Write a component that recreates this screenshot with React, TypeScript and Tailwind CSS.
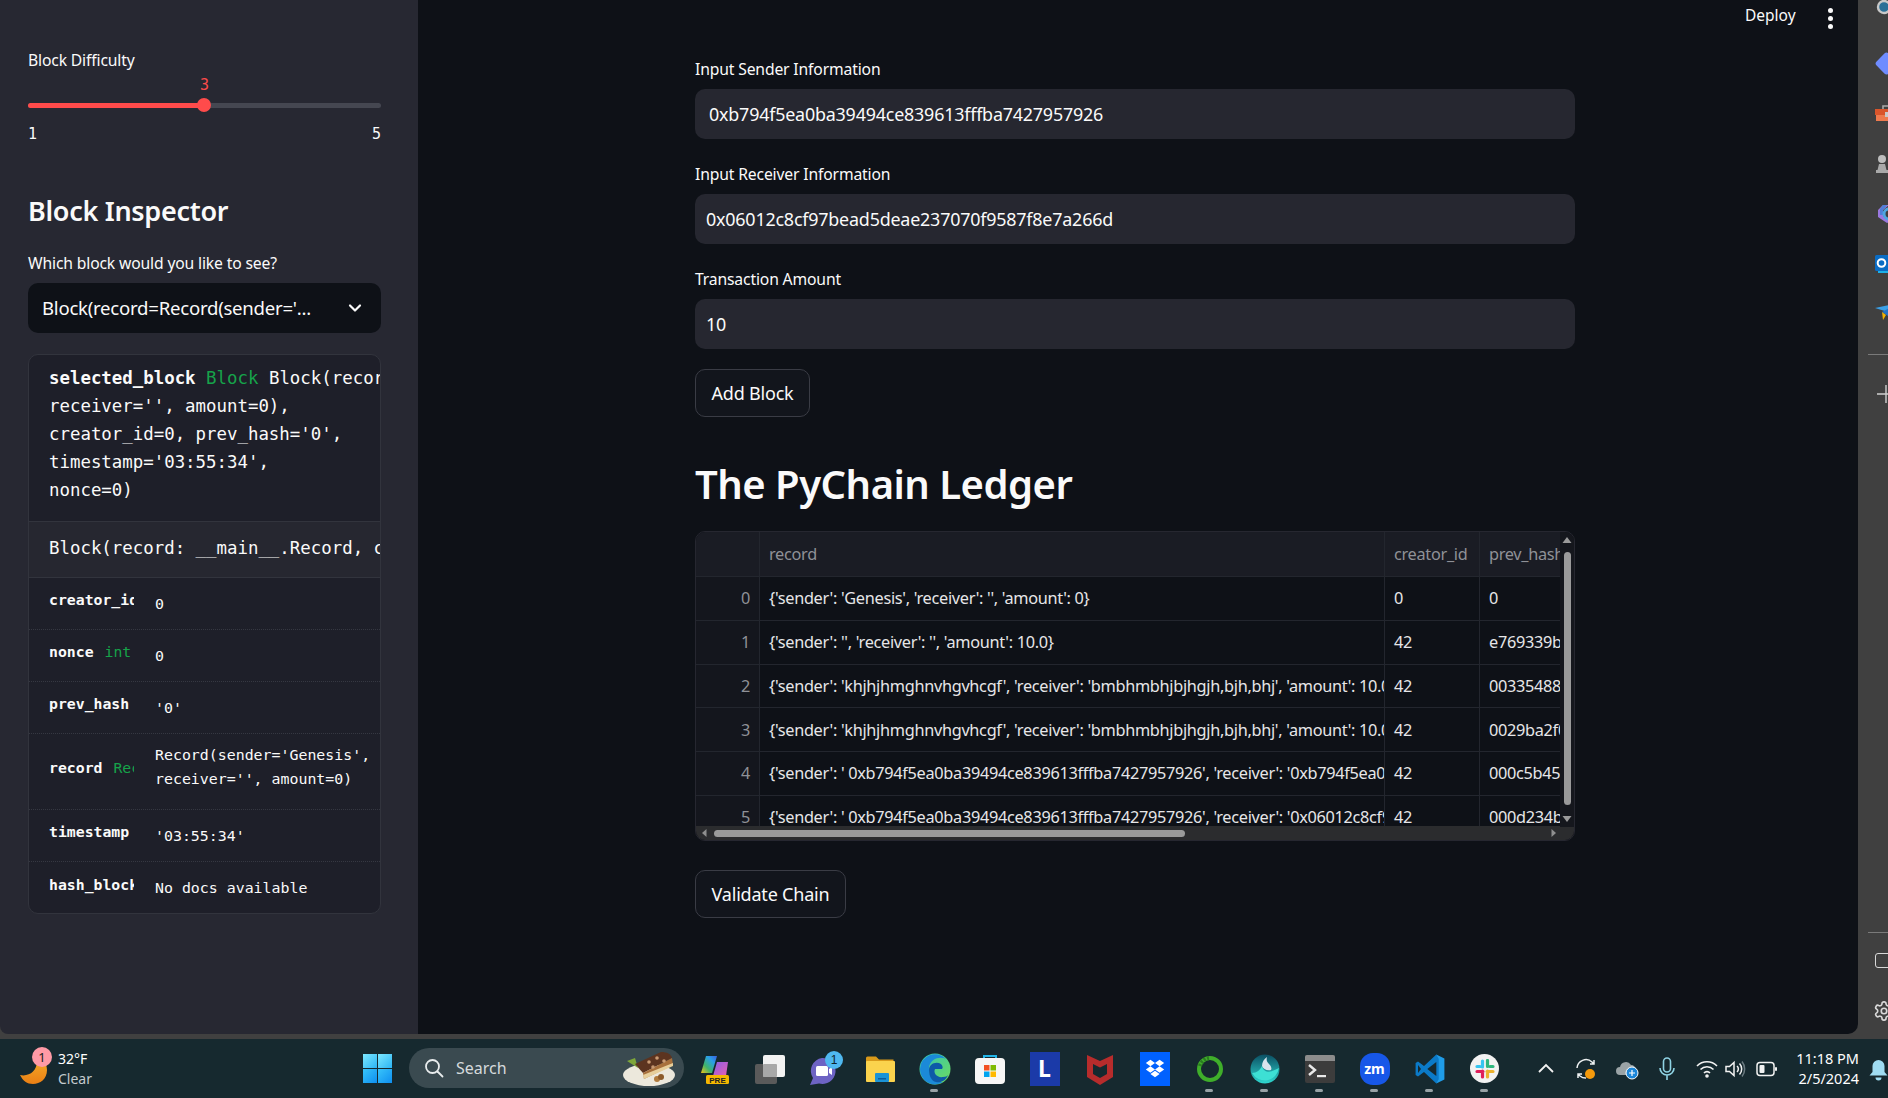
import React from "react";

const sans = "font-['Noto_Sans',sans-serif]";
const mono = "font-['DejaVu_Sans_Mono',monospace]";

function Label({ children }: { children: React.ReactNode }) {
  return <div className="h-[20px] text-[15.7px] leading-[20px] text-[#fafafa] whitespace-nowrap tracking-[-0.15px]">{children}</div>;
}

function Field({ label, value, px, mt }: { label: string; value: string; px: string; mt: string }) {
  return (
    <div className={mt}>
      <Label>{label}</Label>
      <div className={`mt-[10px] h-[50px] rounded-[10px] bg-[#262730] flex items-center text-[17.9px] text-[#fafafa] tracking-[-0.2px] ${px}`}>{value}</div>
    </div>
  );
}

function Btn({ children, w, mt }: { children: React.ReactNode; w: string; mt: string }) {
  return (
    <div className={`${w} ${mt} h-[48px] rounded-[10px] border border-[#3a3c45] bg-[#12151c] flex items-center justify-center text-[18px] text-[#fafafa] tracking-[-0.2px]`}>{children}</div>
  );
}

const COLS = "grid grid-cols-[64px_625px_95px_82px]";
const rows: [string, string, string, string][] = [
  ["0", "{'sender': 'Genesis', 'receiver': '', 'amount': 0}", "0", "0"],
  ["1", "{'sender': '', 'receiver': '', 'amount': 10.0}", "42", "e769339b1"],
  ["2", "{'sender': 'khjhjhmghnvhgvhcgf', 'receiver': 'bmbhmbhjbjhgjh,bjh,bhj', 'amount': 10.0}", "42", "003354885"],
  ["3", "{'sender': 'khjhjhmghnvhgvhcgf', 'receiver': 'bmbhmbhjbjhgjh,bjh,bhj', 'amount': 10.0}", "42", "0029ba2f0"],
  ["4", "{'sender': ' 0xb794f5ea0ba39494ce839613fffba7427957926', 'receiver': '0xb794f5ea0ba39494ce839613fffba7427957926'}", "42", "000c5b452"],
  ["5", "{'sender': ' 0xb794f5ea0ba39494ce839613fffba7427957926', 'receiver': '0x06012c8cf97bead5deae237070f9587f8e7a266d'}", "42", "000d234b4"],
];

function Cell({ children, last }: { children: React.ReactNode; last?: boolean }) {
  return (
    <div className={`px-[9px] flex items-center overflow-hidden whitespace-nowrap border-b border-[#23262e] ${last ? "" : "border-r"}`}>
      <span className="block">{children}</span>
    </div>
  );
}

function DataTable() {
  return (
    <div className="mt-[19px] w-[880px] h-[310px] rounded-[10px] border border-[#262730] overflow-hidden relative flex flex-col text-[16.3px] tracking-[-0.3px]">
      <div className="h-[295px] overflow-hidden w-[866px]">
        <div className={`${COLS} h-[45px] bg-[#1a1c24] text-[#8f9197]`}>
          <Cell>{""}</Cell>
          <Cell>record</Cell>
          <Cell>creator_id</Cell>
          <Cell last>prev_hash</Cell>
        </div>
        {rows.map((r) => (
          <div key={r[0]} className={`${COLS} h-[43.8px] text-[#e6e6e8]`}>
            <div className="pr-[9px] flex items-center justify-end bg-[#14161d] text-[#8f9197] border-r border-b border-[#23262e]">{r[0]}</div>
            <Cell>{r[1]}</Cell>
            <Cell>{r[2]}</Cell>
            <Cell last>{r[3]}</Cell>
          </div>
        ))}
      </div>
      {/* horizontal scrollbar */}
      <div className="h-[14px] bg-[#2b2c2e] flex items-center relative">
        <svg width="880" height="14" className="absolute left-0 top-0">
          <path d="M6 7l4.500-4v8z" fill="#8f8f8f" />
          <path d="M860 7l-4.500-4v8z" fill="#8f8f8f" />
        </svg>
        <div className="ml-[18px] w-[471px] h-[7px] rounded-full bg-[#9a9a9a] relative" />
      </div>
      {/* vertical scrollbar */}
      <div className="absolute right-0 top-0 w-[14px] h-[295px] bg-[#15171d] flex justify-center">
        <svg width="14" height="295" className="absolute left-0 top-0">
          <path d="M7 5l4.500 6h-9z" fill="#9a9a9a" />
          <path d="M7 290l4.500-6h-9z" fill="#9a9a9a" />
        </svg>
        <div className="mt-[20px] w-[7px] h-[253px] rounded-full bg-[#9a9a9a]" />
      </div>
    </div>
  );
}

function InspectRow({ name, type, h, valueClass, children }: { name: string; type?: string; h: string; valueClass?: string; children: React.ReactNode }) {
  return (
    <div className={`${h} flex border-b border-dotted border-[#363842] last:border-b-0`}>
      <div className="w-[85px] ml-[20px] shrink-0 overflow-hidden whitespace-nowrap flex items-center pb-[6px] text-[14.8px]">
        <b className="font-bold text-[#fafafa]">{name}</b>
        {type && <span className="ml-[11px] text-[#16a34a]">{type}</span>}
      </div>
      <div className={`ml-[21px] flex items-center text-[14.9px] leading-[24px] text-[#fafafa] whitespace-pre ${valueClass ?? ""}`}>{children}</div>
    </div>
  );
}

function Inspector() {
  return (
    <div className={`mt-[21px] h-[560px] rounded-[10px] border border-[#32343d] overflow-hidden bg-[#1e1f29] ${mono}`}>
      <div className="h-[167px] pl-[20px] pt-[9px] text-[17.4px] leading-[28px] text-[#fafafa] whitespace-pre overflow-hidden border-b border-[#32343d]">
        <div><b>selected_block</b> <span className="text-[#16a34a]">Block</span> Block(record=Record(sender='Genesis',</div>
        <div>receiver='', amount=0),</div>
        <div>creator_id=0, prev_hash='0',</div>
        <div>timestamp='03:55:34',</div>
        <div>nonce=0)</div>
      </div>
      <div className="h-[56px] pl-[20px] pb-[3px] flex items-center text-[17.4px] bg-[#262730] text-[#fafafa] whitespace-pre overflow-hidden border-b border-[#32343d]">
        Block(record: __main__.Record, creator_id: int)
      </div>
      <InspectRow name="creator_id" h="h-[52px]">0</InspectRow>
      <InspectRow name="nonce" type="int" h="h-[52px]">0</InspectRow>
      <InspectRow name="prev_hash" h="h-[52px]">'0'</InspectRow>
      <InspectRow name="record" type="Record" h="h-[76px]" valueClass="pb-[9px]">{"Record(sender='Genesis',\nreceiver='', amount=0)"}</InspectRow>
      <InspectRow name="timestamp" h="h-[52px]">'03:55:34'</InspectRow>
      <InspectRow name="hash_block" h="h-[52px]">No docs available</InspectRow>
    </div>
  );
}

function Sidebar() {
  return (
    <aside className="w-[418px] shrink-0 bg-[#272832] rounded-bl-[8px] pl-[28px] pr-[37px] pt-[50px]">
      <Label>Block Difficulty</Label>
      <div className="pt-[33px]">
        <div className="relative h-[5px] rounded-full bg-[#454751]">
          <div className="h-[5px] w-[176px] rounded-full bg-[#ff4b4b]" />
          <div className="absolute left-[169px] top-[-5px] w-[14px] h-[14px] rounded-full bg-[#ff4b4b]" />
          <div className={`absolute left-[172px] top-[-27px] h-[18px] leading-[18px] text-[15px] text-[#ff4b4b] ${mono}`}>3</div>
        </div>
      </div>
      <div className={`mt-[17px] h-[18px] leading-[18px] flex justify-between text-[15px] text-[#fafafa] ${mono}`}>
        <span>1</span>
        <span>5</span>
      </div>
      <h2 className="mt-[50px] h-[36px] leading-[36px] text-[27px] font-semibold text-[#fafafa] tracking-[-0.3px]">Block Inspector</h2>
      <div className="mt-[24px]"><Label>Which block would you like to see?</Label></div>
      <div className="mt-[10px] h-[50px] rounded-[10px] bg-[#0e1117] pl-[14px] pr-[16px] flex items-center justify-between text-[18.6px] text-[#fafafa] tracking-[-0.25px]">
        <span>Block(record=Record(sender='...</span>
        <svg width="20" height="20" viewBox="0 0 20 20" fill="none"><path d="M5 7.500l5 5 5-5" stroke="#fafafa" strokeWidth="2.200" strokeLinecap="round" strokeLinejoin="round" /></svg>
      </div>
      <Inspector />
    </aside>
  );
}

function RightBar() {
  return (
    <div className="w-[30px] shrink-0 flex flex-col overflow-hidden">
      <div className="h-[20px] pl-[17px] flex items-center"><svg width="24" height="24" viewBox="0 0 24 24" className="shrink-0"><circle cx="9" cy="9" r="6" fill="#2a6f97" stroke="#c8c8c8" strokeWidth="2.400" /></svg></div>
      <div className="mt-[19px] h-[50px] pl-[17px] flex items-center"><svg width="24" height="24" viewBox="0 0 24 24" className="shrink-0"><rect x="3" y="3" width="17" height="17" rx="3" transform="rotate(45 11.500 11.500)" fill="#6f8cff" /></svg></div>
      <div className="h-[50px] pl-[17px] flex items-center"><svg width="24" height="24" viewBox="0 0 24 24" className="shrink-0"><path d="M8 7V4h9v3" stroke="#a8a8a8" strokeWidth="1.600" fill="none" /><rect y="7" width="24" height="6" fill="#d9552b" /><rect x="1" y="13" width="22" height="6" fill="#ee7a4e" /><rect x="10" y="10" width="4" height="5" fill="#c9c9c9" /></svg></div>
      <div className="h-[50px] pl-[17px] flex items-center"><svg width="24" height="24" viewBox="0 0 24 24" className="shrink-0"><circle cx="7" cy="7" r="4" fill="#bdbdbd" /><path d="M4 12h6l1.500 6H2.500z M1 18h12v3H1z" fill="#a9a9a9" /><rect x="13" y="2" width="4" height="4" fill="#8f6ac9" /><rect x="13" y="10" width="4" height="4" fill="#8f6ac9" /></svg></div>
      <div className="h-[50px] pl-[17px] flex items-center"><svg width="24" height="24" viewBox="0 0 24 24" className="shrink-0"><path d="M3 8l5-5h6L8 8v6l8 5-4 2-9-6z" fill="#9a78e0" /><path d="M8 3h4L8 8v5H5V7z" fill="#4e7fd8" /><circle cx="14" cy="12" r="5" fill="none" stroke="#4fa6e0" strokeWidth="3" /></svg></div>
      <div className="h-[50px] pl-[17px] flex items-center"><svg width="24" height="24" viewBox="0 0 24 24" className="shrink-0"><rect x="3" y="6" width="21" height="15" fill="#1db0e8" /><rect y="3" width="15" height="16" rx="1.500" fill="#0a6cc4" /><circle cx="6.500" cy="11" r="3.800" fill="none" stroke="#ffffff" strokeWidth="2" /></svg></div>
      <div className="mt-[2px] h-[44px] pl-[17px] flex items-center"><svg width="24" height="24" viewBox="0 0 24 24" className="shrink-0"><path d="M0 7l24-5-11 9z" fill="#3aa0e8" /><path d="M7 11l17-9-8 15z" fill="#2474c8" /><path d="M7 11l1 8 3-5z" fill="#f5b301" /></svg></div>
      <div className="mt-[19px] ml-[10px] w-[20px] h-px bg-[#7a7a7a]" />
      <div className="mt-[28px] h-[22px] pl-[18px] flex items-center"><svg width="22" height="22" viewBox="0 0 22 22" className="shrink-0"><path d="M10 2v18M1 11h18" stroke="#cfcfcf" strokeWidth="1.400" /></svg></div>
      <div className="flex-1" />
      <div className="ml-[10px] w-[20px] h-px bg-[#7a7a7a]" />
      <div className="mt-[19px] h-[16px] pl-[17px] flex items-center"><div className="w-[20px] h-[15px] shrink-0 rounded-[3px] border-[1.500px] border-[#d8d8d8]" /></div>
      <div className="mt-[32px] mb-[12px] h-[22px] pl-[15px] flex items-center"><svg width="22" height="22" viewBox="0 0 24 24" fill="none" stroke="#d8d8d8" strokeWidth="1.800" className="shrink-0"><path d="M12.220 2h-.44a2 2 0 0 0-2 2v.18a2 2 0 0 1-1 1.730l-.43.250a2 2 0 0 1-2 0l-.15-.080a2 2 0 0 0-2.730.730l-.22.380a2 2 0 0 0 .730 2.730l.15.100a2 2 0 0 1 1 1.720v.510a2 2 0 0 1-1 1.740l-.15.090a2 2 0 0 0-.730 2.730l.22.380a2 2 0 0 0 2.730.730l.15-.080a2 2 0 0 1 2 0l.43.250a2 2 0 0 1 1 1.730V20a2 2 0 0 0 2 2h.44a2 2 0 0 0 2-2v-.18a2 2 0 0 1 1-1.730l.43-.250a2 2 0 0 1 2 0l.15.080a2 2 0 0 0 2.730-.730l.22-.390a2 2 0 0 0-.730-2.730l-.15-.080a2 2 0 0 1-1-1.740v-.500a2 2 0 0 1 1-1.740l.15-.090a2 2 0 0 0 .730-2.730l-.22-.380a2 2 0 0 0-2.730-.730l-.15.080a2 2 0 0 1-2 0l-.43-.250a2 2 0 0 1-1-1.730V4a2 2 0 0 0-2-2z" /><circle cx="12" cy="12" r="3" /></svg></div>
    </div>
  );
}

function Slot({ children, dot }: { children: React.ReactNode; dot?: boolean }) {
  return (
    <div className="w-[55px] h-full relative flex items-center justify-center shrink-0">
      {children}
      {dot && <div className="absolute bottom-[6px] left-[23px] w-[8px] h-[3px] rounded-full bg-[#98a2a6]" />}
    </div>
  );
}

const Copilot = () => (
  <svg width="32" height="32" viewBox="0 0 32 32">
    <defs>
      <linearGradient id="cp1" x1="0" y1="1" x2="1" y2="0"><stop offset="0" stopColor="#f5c518" /><stop offset=".35" stopColor="#3fb46a" /><stop offset=".7" stopColor="#2a9fe8" /><stop offset="1" stopColor="#3a5fe0" /></linearGradient>
      <linearGradient id="cp2" x1="0" y1="0" x2="1" y2="1"><stop offset="0" stopColor="#8a5fe8" /><stop offset="1" stopColor="#e85fb0" /></linearGradient>
    </defs>
    <path d="M7 3h11l-5 17H2z" fill="url(#cp1)" />
    <path d="M18 9h11l-2 14H14z" fill="url(#cp2)" />
    <rect x="7" y="22" width="23" height="9" rx="1.500" fill="#f5b800" />
    <text x="18.500" y="29.500" textAnchor="middle" fontSize="8" fontWeight="700" fill="#222" fontFamily="Liberation Sans">PRE</text>
  </svg>
);
const TaskView = () => (
  <svg width="32" height="32" viewBox="0 0 32 32">
    <rect x="1" y="11" width="22" height="20" rx="2" fill="#5a5a5a" />
    <rect x="9" y="2" width="22" height="22" rx="2" fill="#f2f2f2" />
    <rect x="9" y="11" width="14" height="13" rx="1" fill="#a8a8a8" />
  </svg>
);
const Teams = () => (
  <svg width="36" height="36" viewBox="0 0 36 36">
    <path d="M15 7a13 13 0 1 1-3 25.500L3 34l3-7A13 13 0 0 1 15 7z" fill="#6d63c4" />
    <rect x="9" y="15" width="12" height="10" rx="1.500" fill="#fff" />
    <path d="M22 18l3-2v8l-3-2z" fill="#fff" />
    <circle cx="27" cy="9" r="9" fill="#4fb8f0" />
    <text x="27" y="13" textAnchor="middle" fontSize="12" fill="#10242c" fontFamily="Liberation Sans">1</text>
  </svg>
);
const Folder = () => (
  <svg width="30" height="30" viewBox="0 0 30 30">
    <path d="M1 4a1.500 1.500 0 0 1 1.500-1.500H11l3 3h14.500V9H1z" fill="#d99a1a" />
    <rect x="1" y="7" width="29" height="21" rx="1" fill="#fbd34d" />
    <rect x="10" y="19" width="14" height="9" rx="1" fill="#1b93d6" />
    <rect x="13" y="24" width="8" height="1.500" fill="#0d5c9c" />
  </svg>
);
const Edge = () => (
  <svg width="32" height="32" viewBox="0 0 32 32">
    <defs>
      <linearGradient id="ed1" x1="0" y1="0" x2="1" y2="1"><stop offset="0" stopColor="#31c4b8" /><stop offset="1" stopColor="#6fdc5c" /></linearGradient>
    </defs>
    <circle cx="16" cy="16" r="15.500" fill="url(#ed1)" />
    <path d="M1 16A15 15 0 0 1 27 6c-6-3-15-1-17 8-1 8 5 15 14 15a15 15 0 0 1-8 2.500C8 31.500 1 25 1 16z" fill="#1b8ad8" />
    <path d="M10 17c0-6 7-9 12-6 2 2 2 4 1 5h-7c-2 4 2 9 8 8 3 0 4-1 5-2-2 6-8 8-12 7-5-1-7-7-7-12z" fill="#0d5aa8" />
  </svg>
);
const Store = () => (
  <svg width="30" height="32" viewBox="0 0 30 32">
    <path d="M9 6V3h12v3" fill="none" stroke="#22b5e8" strokeWidth="2" />
    <rect y="5" width="30" height="26" rx="4" fill="#f6f6f6" />
    <rect x="9" y="12" width="5.500" height="5.500" fill="#f25022" />
    <rect x="15.500" y="12" width="5.500" height="5.500" fill="#7fba00" />
    <rect x="9" y="18.500" width="5.500" height="5.500" fill="#00a4ef" />
    <rect x="15.500" y="18.500" width="5.500" height="5.500" fill="#ffb900" />
  </svg>
);
const LApp = () => (
  <div className="w-[30px] h-[34px] bg-[#1b3aa8] flex items-center justify-center text-white text-[23px] font-bold">L</div>
);
const McAfee = () => (
  <svg width="26" height="34" viewBox="0 0 26 32">
    <path d="M0 2l13 6 13-6v22l-13 8-13-8z" fill="#b72c2c" />
    <path d="M6 11l7 3.500 7-3.500v10l-7 4-7-4z" fill="#16292f" />
  </svg>
);
const Dropbox = () => (
  <div className="w-[30px] h-[34px] bg-[#0061fe] flex items-center justify-center">
    <svg width="22" height="22" viewBox="0 0 24 24" fill="#fff"><path d="M7 2L2 5.500 7 9l5-3.500zM17 2l-5 3.500L17 9l5-3.500zM2 12.500L7 16l5-3.500L7 9zM22 12.500L17 16l-5-3.500L17 9zM7 17.500l5 3.500 5-3.500-5-3.500z" /></svg>
  </div>
);
const Ring = () => (
  <svg width="30" height="32" viewBox="0 0 30 30">
    <circle cx="15" cy="15" r="11" fill="none" stroke="#3fae2a" strokeWidth="4" />
    <path d="M5 12a11 11 0 0 1 9-8" fill="none" stroke="#2c7a22" strokeWidth="4" strokeDasharray="2 1.500" />
  </svg>
);
const BlueCircle = () => (
  <svg width="30" height="32" viewBox="0 0 30 32">
    <defs><linearGradient id="bc" x1="0" y1="0" x2="0" y2="1"><stop offset="0" stopColor="#0b4f63" /><stop offset="1" stopColor="#2fd8d0" /></linearGradient></defs>
    <circle cx="15" cy="16" r="14.500" fill="url(#bc)" />
    <path d="M2 20c5 0 8-3 10-7 1 5 6 7 10 5 3-1 5-2 7-3a14.500 14.500 0 0 1-27 5z" fill="#3de0d4" />
    <path d="M12 13c0-4 2-7 5-9-1 3 0 5 2 7 2 2 3 4 2 6-4 1-8-1-9-4z" fill="#d8e4ec" />
  </svg>
);
const Terminal = () => (
  <svg width="30" height="30" viewBox="0 0 30 30">
    <rect width="30" height="28" y="1" rx="2" fill="#3c3c3c" />
    <path d="M0 3a2 2 0 0 1 2-2h26a2 2 0 0 1 2 2v4H0z" fill="#8c8c8c" />
    <path d="M4 11l6 5-6 5" fill="none" stroke="#e8e8e8" strokeWidth="2.400" />
    <rect x="12" y="21" width="9" height="2.200" fill="#e8e8e8" />
  </svg>
);
const Zoom = () => (
  <div className="w-[30px] h-[32px] rounded-[13px] bg-[#1757e8] flex items-center justify-center text-white text-[14px] font-bold">zm</div>
);
const VSCode = () => (
  <svg width="30" height="32" viewBox="0 0 100 100">
    <path d="M71 2L98 15v70L71 98z" fill="#1f9ce8" />
    <path d="M71 2L30 40 10 25 2 30v40l8 5 20-15 41 38 8-14V16z" fill="#0b7ac8" />
    <path d="M71 27L41 50l30 23z" fill="#16292f" />
    <path d="M10 37l10 13-10 13z" fill="#16292f" />
  </svg>
);
const Slack = () => (
  <div className="w-[29px] h-[29px] rounded-full bg-[#f2f2f2] flex items-center justify-center">
    <svg width="20" height="20" viewBox="0 0 20 20" fill="none" strokeWidth="3.200" strokeLinecap="round">
      <path d="M7.500 2v6M2 7.500h3" stroke="#36c5f0" />
      <path d="M12.500 2v6M18 8h-3" stroke="#2eb67d" transform="translate(0 -.5)" />
      <path d="M12.500 18v-6M18 12.500h-6" stroke="#ecb22e" />
      <path d="M7.500 18v-6M2 12.500h6" stroke="#e01e5a" />
    </svg>
  </div>
);

const Pie = () => (
  <svg width="54" height="38" viewBox="0 0 54 38">
    <ellipse cx="28" cy="26" rx="26" ry="11" fill="#ece8dc" />
    <path d="M6 12l8-3 3 10z" fill="#7ea63a" />
    <path d="M14 15L40 3c6 0 10 2 11 6L22 24z" fill="#5c3420" />
    <path d="M22 24L51 9l1 7-29 14z" fill="#a8703c" />
    <path d="M22 26L52 14l0 3-29 13z" fill="#e7cf9c" />
    <circle cx="28" cy="13" r="1.800" fill="#c89a72" /><circle cx="36" cy="9" r="1.800" fill="#c89a72" /><circle cx="32" cy="18" r="1.800" fill="#c89a72" /><circle cx="43" cy="12" r="1.800" fill="#c89a72" />
    <circle cx="36" cy="30" r="3" fill="#b07a3c" /><circle cx="40" cy="28" r="3" fill="#8c5a2a" />
  </svg>
);

function Taskbar() {
  return (
    <div className={`h-[59px] bg-[#16292f] flex relative ${sans}`}>
      {/* weather */}
      <div className="w-[363px] shrink-0 pl-[18px] flex items-center relative">
        <svg width="32" height="36" viewBox="0 0 32 36" className="shrink-0">
          <defs><linearGradient id="mn" x1="0" y1="0" x2="0" y2="1"><stop offset="0" stopColor="#f6b12c" /><stop offset="1" stopColor="#ea7f14" /></linearGradient></defs>
          <path d="M2 24c9 2 17-4 17-14 0-3 0-4-1-6 6 1 11 8 11 15 0 9-7 14-14 14-6 0-10-3-13-9z" fill="url(#mn)" />
        </svg>
        <div className="absolute left-[32px] top-[8px] w-[20px] h-[20px] rounded-full bg-[#ff9aa6] text-[#1d1d1d] text-[13px] leading-[20px] text-center">1</div>
        <div className="ml-[8px] text-[14px] leading-[20px]">
          <div className="text-white">32°F</div>
          <div className="text-[#c4cbce]">Clear</div>
        </div>
      </div>
      {/* windows logo */}
      <div className="w-[29px] shrink-0 h-full flex items-center">
        <svg width="29" height="29" viewBox="0 0 29 29">
          <defs>
            <linearGradient id="wa" x1="0" y1="0" x2="1" y2="1"><stop offset="0" stopColor="#7ce8ff" /><stop offset="1" stopColor="#2cb4f4" /></linearGradient>
            <linearGradient id="wb" x1="0" y1="0" x2="1" y2="1"><stop offset="0" stopColor="#38c4fa" /><stop offset="1" stopColor="#0e8ff0" /></linearGradient>
          </defs>
          <rect width="14" height="14" fill="url(#wa)" /><rect x="15" width="14" height="14" fill="url(#wa)" />
          <rect y="15" width="14" height="14" fill="url(#wb)" /><rect x="15" y="15" width="14" height="14" fill="url(#wb)" />
        </svg>
      </div>
      {/* search */}
      <div className="ml-[17px] mt-[9px] w-[275px] h-[40px] rounded-full bg-[#3a4a50] pl-[15px] pr-[9px] flex items-center shrink-0">
        <svg width="20" height="20" viewBox="0 0 20 20" fill="none" stroke="#e8eced" strokeWidth="1.800"><circle cx="8.500" cy="8.500" r="6.500" /><path d="M13.500 13.500l5 5" strokeLinecap="round" /></svg>
        <span className="ml-[12px] text-[16px] text-[#d5dadc]">Search</span>
        <div className="flex-1" />
        <Pie />
      </div>
      <div className="ml-[3px] flex h-full">
        <Slot><Copilot /></Slot>
        <Slot><TaskView /></Slot>
        <Slot><Teams /></Slot>
        <Slot><Folder /></Slot>
        <Slot dot><Edge /></Slot>
        <Slot><Store /></Slot>
        <Slot><LApp /></Slot>
        <Slot><McAfee /></Slot>
        <Slot><Dropbox /></Slot>
        <Slot dot><Ring /></Slot>
        <Slot dot><BlueCircle /></Slot>
        <Slot dot><Terminal /></Slot>
        <Slot dot><Zoom /></Slot>
        <Slot dot><VSCode /></Slot>
        <Slot dot><Slack /></Slot>
      </div>
      {/* tray */}
      <div className="ml-[25px] flex items-center h-full">
        <svg width="18" height="18" viewBox="0 0 18 18" fill="none" stroke="#f2f2f2" strokeWidth="1.800"><path d="M2 12l7-7 7 7" /></svg>
        <svg width="24" height="24" viewBox="0 0 24 24" fill="none" className="ml-[19px]"><path d="M3 11a9 9 0 0 1 15-6l2 2M20 3v4h-4M21 15M4 21v-4h4M4 17l2 2a9 9 0 0 0 6 2" stroke="#eef1f2" strokeWidth="1.500" /><circle cx="16" cy="17" r="5" fill="#f59a0c" /></svg>
        <svg width="24" height="22" viewBox="0 0 24 22" className="ml-[18px]"><path d="M4 17a4 4 0 0 1 0-8 6 6 0 0 1 11-2 5 5 0 0 1 5 5v5z" fill="#9aa3a6" /><circle cx="16" cy="15" r="6" fill="#1c86d8" stroke="#fff" strokeWidth="1" /><path d="M13 15h6M16 12v6" stroke="#fff" strokeWidth="1.200" /></svg>
        <svg width="20" height="26" viewBox="0 0 20 26" fill="none" stroke="#8fd3e4" strokeWidth="1.600" className="ml-[17px]"><rect x="6.500" y="2" width="7" height="14" rx="3.500" /><path d="M3 12a7 7 0 0 0 14 0M10 19v5" /></svg>
        <svg width="24" height="20" viewBox="0 0 24 20" fill="none" stroke="#f2f2f2" strokeWidth="1.600" className="ml-[18px]"><path d="M2 7a14 14 0 0 1 20 0M5.500 10.500a9 9 0 0 1 13 0M9 14a4 4 0 0 1 6 0" /><circle cx="12" cy="17" r="1" fill="#f2f2f2" /></svg>
        <svg width="22" height="20" viewBox="0 0 22 20" fill="none" stroke="#f2f2f2" strokeWidth="1.500" className="ml-[5px]"><path d="M2 7.500h3.500L10 3.500v13l-4.500-4H2z" /><path d="M13 7a4 4 0 0 1 0 6M15.500 4.500a8 8 0 0 1 0 11" /><path d="M18 2.500a12 12 0 0 1 0 15" stroke="#6b7a80" /></svg>
        <svg width="22" height="16" viewBox="0 0 22 16" fill="none" className="ml-[10px]"><rect x="1" y="1.500" width="17" height="13" rx="3" stroke="#f2f2f2" strokeWidth="1.500" /><rect x="3.500" y="4" width="5" height="8" rx="1" fill="#f2f2f2" /><rect x="19" y="6" width="2" height="4" rx="1" fill="#f2f2f2" /></svg>
      </div>
      <div className="absolute left-[1795px] top-[9px] w-[64px] text-right text-[14.500px] leading-[20px] text-white whitespace-nowrap">
        <div>11:18 PM</div>
        <div>2/5/2024</div>
      </div>
      <div className="absolute left-[1869px] top-[20px]">
        <svg width="19" height="24" viewBox="0 0 19 24"><path d="M9.500 1a6 6 0 0 1 6 6v6l3 3.500H.500l3-3.500V7a6 6 0 0 1 6-6z" fill="#9fdcf2" /><path d="M6.500 18.500a3 3 0 0 0 6 0z" fill="#9fdcf2" /></svg>
      </div>
    </div>
  );
}

export default function App() {
  return (
    <div className={`w-[1888px] h-[1098px] overflow-hidden flex flex-col bg-[#404040] ${sans}`}>
      <div className="h-[1034px] flex shrink-0">
        <Sidebar />
        <main className="flex-1 bg-[#0e1117] rounded-br-[10px] relative pl-[277px] pt-[59px]">
          <div className="absolute left-[1327px] top-0 h-[32px] flex items-center text-[15.500px] text-[#fafafa]">Deploy</div>
          <div className="absolute left-[1410px] top-[8px] flex flex-col gap-[3.500px]">
            <div className="w-[4.500px] h-[4.500px] rounded-full bg-[#fafafa]" />
            <div className="w-[4.500px] h-[4.500px] rounded-full bg-[#fafafa]" />
            <div className="w-[4.500px] h-[4.500px] rounded-full bg-[#fafafa]" />
          </div>
          <div className="w-[880px]">
            <Field mt="" px="pl-[14px]" label="Input Sender Information" value="0xb794f5ea0ba39494ce839613fffba7427957926" />
            <Field mt="mt-[25px]" px="pl-[11px]" label="Input Receiver Information" value="0x06012c8cf97bead5deae237070f9587f8e7a266d" />
            <Field mt="mt-[25px]" px="pl-[11px]" label="Transaction Amount" value="10" />
            <Btn w="w-[115px]" mt="mt-[20px]">Add Block</Btn>
            <h1 className="mt-[39px] h-[56px] leading-[56px] text-[40px] font-semibold text-[#fafafa] tracking-[-0.5px] whitespace-nowrap">The PyChain Ledger</h1>
            <DataTable />
            <Btn w="w-[151px]" mt="mt-[29px]">Validate Chain</Btn>
          </div>
        </main>
        <RightBar />
      </div>
      <div className="h-[5px] shrink-0 bg-[#404040]" />
      <Taskbar />
    </div>
  );
}
